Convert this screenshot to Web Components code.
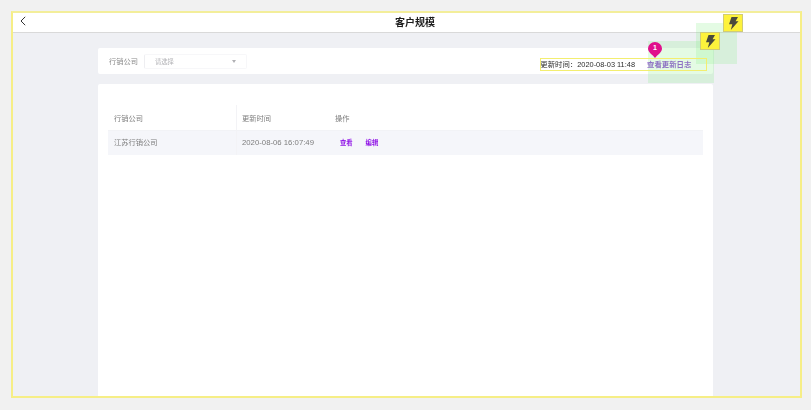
<!DOCTYPE html>
<html lang="zh-CN">
<head>
<meta charset="UTF-8">
<title>客户规模</title>
<style>
  html, body { margin: 0; height: 100%; background: #f1f1f1; overflow: hidden; }
  body { font-family: "Liberation Sans", "Noto Sans CJK SC", sans-serif; }
</style>
</head>
<body>
<app-frame>
  <top-bar slot="bar">客户规模</top-bar>
  <filter-card></filter-card>
  <data-table></data-table>
</app-frame>
<mark-overlay></mark-overlay>

<script>
const bolt = `<svg width="11" height="13" viewBox="0 0 11 13"><path d="M3.500 0H10L7.600 4.300H10.500L2.800 13L4.300 7.200H1z" fill="#4a4a3c"/></svg>`;

class AppFrame extends HTMLElement {
  constructor() {
    super();
    this.attachShadow({ mode: 'open' }).innerHTML = `
      <style>
        :host { display: block; box-sizing: border-box; width: 791px; height: 387px; margin: 11px 0 0 11px;
          border: 2px solid #f6ee86; border-top-color: #f3ee9a; background: #eff0f4; overflow: hidden; }
        main { padding: 15px 87px 0 85px; display: flex; flex-direction: column; gap: 10px; }
      </style>
      <slot name="bar"></slot>
      <main><slot></slot></main>`;
  }
}

class TopBar extends HTMLElement {
  constructor() {
    super();
    this.attachShadow({ mode: 'open' }).innerHTML = `
      <style>
        :host { display: flex; align-items: center; justify-content: center; position: relative; box-sizing: border-box;
          height: 20px; padding: 0 0 2px 17px; background: #fff; border-bottom: 1px solid #d9d9d9; font: bold 10px "Liberation Sans", "Noto Sans CJK SC", sans-serif; color: #1c1c1c; }
        svg { position: absolute; left: 7px; top: 3px; }
        span { filter: blur(.3px); }
      </style>
      <svg width="6" height="10" viewBox="0 0 6 10"><path d="M5.200.8 1 5l4.200 4.200" fill="none" stroke="#333" stroke-width="1"/></svg>
      <span><slot></slot></span>`;
  }
}

class FilterCard extends HTMLElement {
  constructor() {
    super();
    this.attachShadow({ mode: 'open' }).innerHTML = `
      <style>
        :host { display: flex; align-items: center; box-sizing: border-box; height: 26px; padding: 0 6px 0 11px;
          background: #fff; border-radius: 2px; font-size: 7.25px; color: #8a8a8a; }
        span, a { filter: blur(.35px); }
        .select { box-sizing: border-box; width: 103px; height: 15px; margin-left: 6px; padding: 0 10px;
          display: flex; align-items: center; justify-content: space-between; border: 1px solid #f7f7f9; border-left-color: #eeeef1; border-radius: 2px;
          font-size: 6.3px; color: #b0b0b4; }
        .arrow { width: 0; height: 0; border: 2.500px solid transparent; border-top: 3px solid #b0b0b4; border-bottom: 0; }
        .update { margin-left: auto; display: flex; align-items: center; padding-top: 5px; color: #2e2e2e; font-size: 7.4px; }
        .update a { margin-left: 12px; width: 60px; color: #9150d6; font-size: 7.4px; font-weight: bold; }
      </style>
      <span>行销公司</span>
      <div class="select"><span>请选择</span><i class="arrow"></i></div>
      <div class="update"><span>更新时间：2020-08-03 11:48</span><a>查看更新日志</a></div>`;
  }
}

class DataTable extends HTMLElement {
  constructor() {
    super();
    this.attachShadow({ mode: 'open' }).innerHTML = `
      <style>
        :host { display: block; box-sizing: border-box; height: 320px; padding: 21px 10px 0; background: #fff; border-radius: 2px 2px 0 0;
          font-size: 7.25px; color: #7d7d7d; }
        .row { display: grid; grid-template-columns: 129px 93px 1fr; align-items: center; }
        .row > div { padding-left: 5px; height: 100%; display: flex; align-items: center; box-sizing: border-box; }
        .row > div:first-child { border-right: 1px solid #f3f3f6; padding-left: 6px; }
        .head { height: 25px; border-bottom: 1px solid #f2f3f6; }
        .body { height: 24px; background: #f5f6fa; }
        .body > div { padding-bottom: 2px; }
        span, a { filter: blur(.35px); }
        .date { font-size: 7.75px; }
        .ops { gap: 13px; }
        .ops a { color: #8f12e6; font-size: 6.300px; font-weight: bold; }
        .ops a:first-child { margin-left: 5px; }
      </style>
      <div class="row head"><div><span>行销公司</span></div><div><span>更新时间</span></div><div><span>操作</span></div></div>
      <div class="row body"><div><span>江苏行销公司</span></div><div><span class="date">2020-08-06 16:07:49</span></div><div class="ops"><a>查看</a><a>编辑</a></div></div>`;
  }
}

class MarkOverlay extends HTMLElement {
  constructor() {
    super();
    this.attachShadow({ mode: 'open' }).innerHTML = `
      <style>
        :host { display: block; }
        div, svg { position: absolute; box-sizing: border-box; }
        .badge svg { position: static; }
        .green { background: rgba(130, 235, 130, .22); }
        .line { left: 540px; top: 58px; width: 167px; height: 13px; border: 1.500px solid #f3ee70; }
        .badge { width: 20px; height: 18px; background: #fdf23c; border: 1px solid #cfcb78; display: flex; align-items: center; justify-content: center; }
        .pin { left: 648px; top: 42px; width: 14px; height: 16px; }
        .num { left: 648px; top: 44px; width: 14px; text-align: center; font: bold 7px "Liberation Sans", sans-serif; color: #fff; }
      </style>
      <div class="green" style="left:696px;top:23px;width:41px;height:41px"></div>
      <div class="green" style="left:648px;top:41px;width:66px;height:42px"></div>
      <div class="line"></div>
      <div class="badge" style="left:723px;top:14px">${bolt}</div>
      <div class="badge" style="left:700px;top:32px">${bolt}</div>
      <svg class="pin" viewBox="0 0 14 16"><path d="M7 16C5 13 0 10.500 0 6.500A7 6.500 0 0 1 14 6.500C14 10.500 9 13 7 16z" fill="#e0108c"/></svg>
      <div class="num">1</div>`;
  }
}

customElements.define('app-frame', AppFrame);
customElements.define('top-bar', TopBar);
customElements.define('filter-card', FilterCard);
customElements.define('data-table', DataTable);
customElements.define('mark-overlay', MarkOverlay);
</script>
</body>
</html>
